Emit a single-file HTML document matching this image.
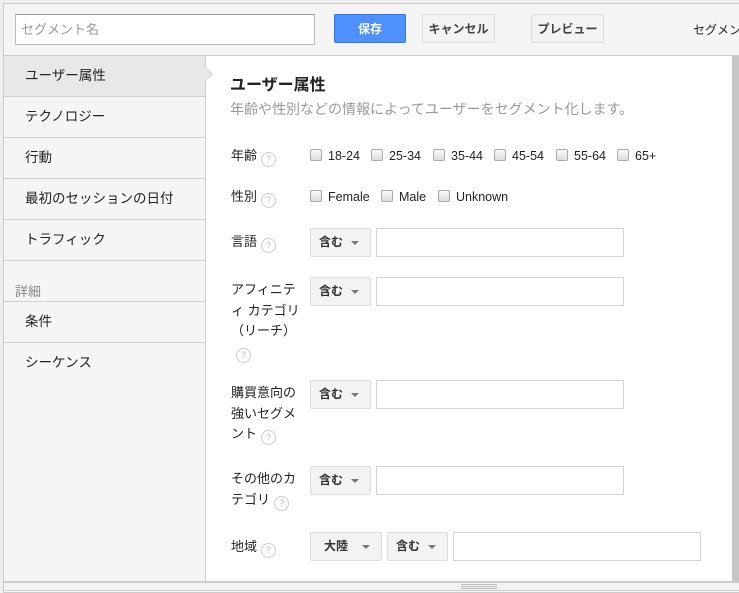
<!DOCTYPE html>
<html><head><meta charset="utf-8"><style>
*{box-sizing:border-box;margin:0;padding:0}
body{width:739px;height:593px;background:#efefef;font-family:"Liberation Sans","Noto Sans CJK JP",sans-serif;font-size:13px;color:#222;position:relative;overflow:hidden}
.a{position:absolute}
.frame{left:3px;top:3px;width:740px;height:590px;border:1px solid #ccc;background:#f5f5f5}
.btn{position:absolute;top:14px;height:29px;border:1px solid #ddd;border-radius:2px;background:#f3f3f3;font-size:12px;font-weight:bold;color:#444;text-align:center;line-height:28px}
.side{left:4px;top:56px;width:202px;height:525px;background:#f5f5f5;border-right:1px solid #ccc}
.it{position:absolute;left:0;width:201px;height:41px;border-bottom:1px solid #d0d0d0;padding-left:21px;line-height:39px;font-size:13.5px;color:#222}
.main{left:206px;top:56px;width:526px;height:525px;background:#fff}
.lbl{position:absolute;left:231px;font-size:13px;line-height:20.5px;color:#222}
.q{display:inline-block;width:15px;height:15px;border:1px solid #ccc;border-radius:50%;font-size:9px;color:#bbb;text-align:center;line-height:13px;vertical-align:-2px;margin-left:4px}
.cb{position:absolute;font-size:12.5px;color:#222}
.cb i{display:inline-block;width:12px;height:12px;border:1px solid #aaa;border-radius:2px;background:linear-gradient(#fafafa,#ddd);vertical-align:-1px;margin-right:6px}
.sel{position:absolute;height:29px;border:1px solid #ddd;border-radius:2px;background:#f3f3f3;font-size:12px;font-weight:bold;color:#333;line-height:26px;padding-left:8px}
.sel:after{content:"";position:absolute;right:11px;top:12px;border:4px solid transparent;border-top:4px solid #777}
.inp{position:absolute;height:29px;border:1px solid #d4d4d4;background:#fff}
</style></head><body>
<div class="a frame"></div>
<div class="a" style="left:4px;top:55px;width:735px;height:1px;background:#ccc"></div>
<div class="a" style="left:15px;top:14px;width:300px;height:31px;border:1px solid #bbb;border-top-color:#999;background:#fff;font-size:13px;color:#999;padding-left:5px;line-height:29px">セグメント名</div>
<div class="btn" style="left:334px;width:72px;background:#4d90fe;border-color:#3079ed;color:#fff">保存</div>
<div class="btn" style="left:422px;width:73px">キャンセル</div>
<div class="btn" style="left:531px;width:73px">プレビュー</div>
<div class="a" style="left:693px;top:21px;font-size:12px;color:#222;white-space:nowrap">セグメント</div>

<div class="a side">
<div class="it" style="top:0;background:#e8e8e8">ユーザー属性</div>
<div class="it" style="top:41px">テクノロジー</div>
<div class="it" style="top:82px">行動</div>
<div class="it" style="top:123px">最初のセッションの日付</div>
<div class="it" style="top:164px">トラフィック</div>
<div class="a" style="left:11px;top:225px;font-size:13px;color:#888">詳細</div>
<div class="it" style="top:245px;border-top:1px solid #d0d0d0;height:42px">条件</div>
<div class="it" style="top:287px;border:none">シーケンス</div>
</div>
<div class="a main"></div>
<div class="a" style="left:205px;top:66px;width:0;height:0;border:8px solid transparent;border-left:8px solid #ccc"></div>
<div class="a" style="left:205px;top:67px;width:0;height:0;border:7px solid transparent;border-left:7px solid #e8e8e8"></div>
<div class="a" style="left:732px;top:56px;width:7px;height:525px;background:#c6c6c6"></div>

<div class="a" style="left:230px;top:71px;font-size:16px;font-weight:bold;color:#222">ユーザー属性</div>
<div class="a" style="left:230px;top:99px;font-size:14px;color:#999">年齢や性別などの情報によってユーザーをセグメント化します。</div>

<div class="lbl" style="top:146px">年齢<span class="q">?</span></div>
<div class="cb" style="left:310px;top:149px"><i></i>18-24</div>
<div class="cb" style="left:371px;top:149px"><i></i>25-34</div>
<div class="cb" style="left:433px;top:149px"><i></i>35-44</div>
<div class="cb" style="left:494px;top:149px"><i></i>45-54</div>
<div class="cb" style="left:556px;top:149px"><i></i>55-64</div>
<div class="cb" style="left:617px;top:149px"><i></i>65+</div>

<div class="lbl" style="top:187px">性別<span class="q">?</span></div>
<div class="cb" style="left:310px;top:190px"><i></i>Female</div>
<div class="cb" style="left:381px;top:190px"><i></i>Male</div>
<div class="cb" style="left:438px;top:190px"><i></i>Unknown</div>

<div class="lbl" style="top:232px">言語<span class="q">?</span></div>
<div class="sel" style="left:310px;top:228px;width:61px">含む</div>
<div class="inp" style="left:376px;top:228px;width:248px"></div>

<div class="lbl" style="top:280px;width:75px">アフィニティ カテゴリ（リーチ）<br><span class="q" style="margin-left:5px">?</span></div>
<div class="sel" style="left:310px;top:277px;width:61px">含む</div>
<div class="inp" style="left:376px;top:277px;width:248px"></div>

<div class="lbl" style="top:383px;width:72px">購買意向の強いセグメント<span class="q">?</span></div>
<div class="sel" style="left:310px;top:380px;width:61px">含む</div>
<div class="inp" style="left:376px;top:380px;width:248px"></div>

<div class="lbl" style="top:469px;width:72px">その他のカテゴリ<span class="q">?</span></div>
<div class="sel" style="left:310px;top:466px;width:61px">含む</div>
<div class="inp" style="left:376px;top:466px;width:248px"></div>

<div class="lbl" style="top:537px">地域<span class="q">?</span></div>
<div class="sel" style="left:310px;top:532px;width:72px;padding-left:13px">大陸</div>
<div class="sel" style="left:387px;top:532px;width:61px">含む</div>
<div class="inp" style="left:453px;top:532px;width:248px"></div>

<div class="a" style="left:4px;top:581px;width:735px;height:2px;background:#ccc"></div>
<div class="a" style="left:4px;top:583px;width:735px;height:8px;background:#f3f3f3;border-bottom:1px solid #ccc"></div>
<div class="a" style="left:461px;top:584px;width:36px;height:5px;border-top:1px solid #bbb;border-bottom:1px solid #bbb"></div>
<div class="a" style="left:461px;top:586px;width:36px;height:1px;background:#bbb"></div>
</body></html>
